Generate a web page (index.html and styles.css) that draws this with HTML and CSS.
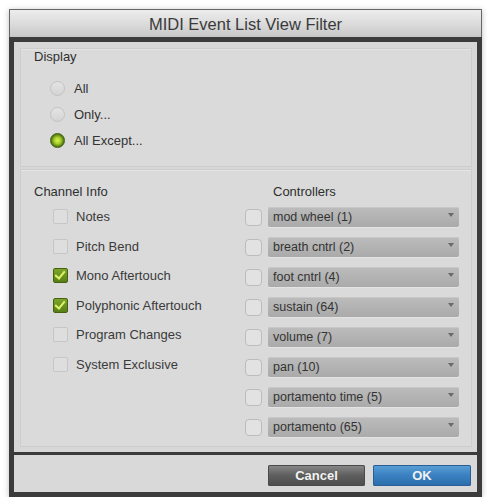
FILE: index.html
```html
<!DOCTYPE html>
<html lang="en">

<head>
    <meta charset="UTF-8">
    <title>MIDI Event List View Filter</title>
    <link rel="stylesheet" href="styles.css">
</head>

<body>
    <div class="window">
        <!-- Title bar -->
        <div class="titlebar">MIDI Event List View Filter</div>

        <div class="frame">
            <div class="content">
                <!-- Display options -->
                <div class="panel display-panel">
                    <div class="group-label">Display</div>
                    <div class="radio-list">
                        <label class="radio-row"><span class="radio"></span>All</label>
                        <label class="radio-row"><span class="radio"></span>Only...</label>
                        <label class="radio-row"><span class="radio selected"></span>All Except...</label>
                    </div>
                </div>

                <!-- Channel info and controllers -->
                <div class="panel filter-panel">
                    <div class="column channel-column">
                        <div class="group-label">Channel Info</div>
                        <label class="check-row"><span class="check"></span>Notes</label>
                        <label class="check-row"><span class="check"></span>Pitch Bend</label>
                        <label class="check-row"><span class="check checked"></span>Mono Aftertouch</label>
                        <label class="check-row"><span class="check checked"></span>Polyphonic Aftertouch</label>
                        <label class="check-row"><span class="check"></span>Program Changes</label>
                        <label class="check-row"><span class="check"></span>System Exclusive</label>
                    </div>
                    <div class="column controller-column">
                        <div class="group-label controllers-label">Controllers</div>
                        <div class="ctrl-row"><span class="ctrl-check"></span><div class="dropdown">mod wheel (1)</div></div>
                        <div class="ctrl-row"><span class="ctrl-check"></span><div class="dropdown">breath cntrl (2)</div></div>
                        <div class="ctrl-row"><span class="ctrl-check"></span><div class="dropdown">foot cntrl (4)</div></div>
                        <div class="ctrl-row"><span class="ctrl-check"></span><div class="dropdown">sustain (64)</div></div>
                        <div class="ctrl-row"><span class="ctrl-check"></span><div class="dropdown">volume (7)</div></div>
                        <div class="ctrl-row"><span class="ctrl-check"></span><div class="dropdown">pan (10)</div></div>
                        <div class="ctrl-row"><span class="ctrl-check"></span><div class="dropdown">portamento time (5)</div></div>
                        <div class="ctrl-row"><span class="ctrl-check"></span><div class="dropdown">portamento (65)</div></div>
                    </div>
                </div>
            </div>

            <!-- Buttons -->
            <div class="footer">
                <button class="btn btn-cancel">Cancel</button>
                <button class="btn btn-ok">OK</button>
            </div>
        </div>
    </div>
</body>

</html>
```

FILE: styles.css
```css
/* Basic styling */
body {
    margin: 0;
    padding: 9px 0 0 9px;
    background: #fff;
    font-family: "Liberation Sans", Arial, sans-serif;
    color: #333;
}

.window {
    width: 473px;
    box-shadow: 0 1px 6px rgba(0, 0, 0, 0.25);
}

.titlebar {
    height: 27px;
    line-height: 29px;
    border: 1px solid #666;
    border-bottom: none;
    background: linear-gradient(#ededed, #d8d8d8 60%, #c6c6c6);
    text-align: center;
    font-size: 16.5px;
    color: #3a3a3a;
}

.frame {
    border: 5px solid #3b3b3b;
    background: #d7d7d7;
}

.content {
    padding: 6px 5px 5px 6px;
}

.panel {
    border: 1px solid #cdcdcd;
    box-shadow: inset 0 1px 0 #e4e4e4;
    background: #dadada;
}

.group-label {
    font-size: 13px;
    line-height: 16px;
    color: #2f2f2f;
}

/* Display panel */
.display-panel {
    height: 117px;
    padding-left: 13px;
    box-sizing: content-box;
}

.radio-list {
    margin-top: 10px;
    padding-left: 16px;
}

.radio-row {
    display: flex;
    align-items: center;
    gap: 9px;
    height: 26px;
    font-size: 13px;
    color: #333;
}

.radio {
    width: 13px;
    height: 13px;
    border-radius: 50%;
    border: 1px solid #c2c2c2;
    background: linear-gradient(#e4e4e4, #d4d4d4);
}

.radio.selected {
    border-color: #3f5f10;
    background: radial-gradient(circle, #d6f552 0, #a8d02a 35%, #4f7414 70%);
}

/* Channel info + controllers */
.filter-panel {
    margin-top: 2px;
    display: flex;
    padding: 14px 12px 4px 13px;
}

.channel-column {
    width: 211px;
}

.check-row {
    display: flex;
    align-items: center;
    gap: 8px;
    height: 29.5px;
    padding-left: 19px;
    font-size: 13px;
    color: #3a3a3a;
}

.channel-column .group-label,
.controllers-label {
    margin-bottom: 2px;
}

.controllers-label {
    padding-left: 28px;
}

.check {
    width: 13px;
    height: 13px;
    border: 1px solid #c6c6c6;
    border-radius: 2px;
    background: #dedede;
    position: relative;
}

.check.checked {
    border-color: #46620f;
    background: linear-gradient(#7ea52a, #587f16);
}

.check.checked::after {
    content: "";
    position: absolute;
    left: 3px;
    top: 0;
    width: 4px;
    height: 8px;
    border-right: 2px solid #dff36a;
    border-bottom: 2px solid #dff36a;
    transform: rotate(40deg);
}

.controller-column {
    flex: 1;
}

.ctrl-row {
    display: flex;
    align-items: center;
    gap: 6px;
    height: 30px;
}

.ctrl-check {
    width: 15px;
    height: 15px;
    border: 1px solid #bcbcbc;
    border-radius: 4px;
    background: #e2e2e2;
    flex: none;
}

.dropdown {
    flex: 1;
    height: 20px;
    line-height: 20px;
    padding-left: 5px;
    border-radius: 2px;
    background: linear-gradient(#bcbcbc, #aaaaaa);
    box-shadow: inset 0 1px 0 #c8c8c8, 0 1px 0 #e4e4e4;
    font-size: 12.5px;
    color: #333;
    position: relative;
}

.dropdown::after {
    content: "";
    position: absolute;
    right: 5px;
    top: 6px;
    border-left: 3px solid transparent;
    border-right: 3px solid transparent;
    border-top: 4px solid #6a6a6a;
}

/* Footer buttons */
.footer {
    border-top: 3px solid #3b3b3b;
    height: 40px;
    box-sizing: border-box;
    padding: 10px 6px 0 0;
    display: flex;
    justify-content: flex-end;
    gap: 8px;
    background: #d9d9d9;
}

.btn {
    height: 21px;
    border: none;
    border-radius: 2px;
    font-family: "Liberation Sans", Arial, sans-serif;
    font-size: 13px;
    font-weight: bold;
    color: #f2f2f2;
    padding: 0;
}

.btn-cancel {
    width: 97px;
    background: linear-gradient(#8a8a8a, #5e5e5e 50%, #4c4c4c);
    box-shadow: inset 0 0 0 1px #4a4a4a;
}

.btn-ok {
    width: 98px;
    background: linear-gradient(#5aa0d6, #3a80c0 50%, #2a6cab);
    box-shadow: inset 0 0 0 1px #2a5f95;
}
```
